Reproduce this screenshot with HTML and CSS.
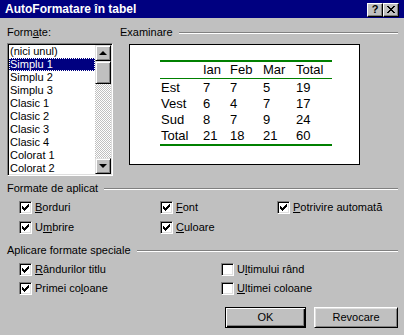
FILE: index.html
```html
<!DOCTYPE html>
<html lang="ro">
    <head>
        <meta charset="utf-8" />
        <title>AutoFormatare în tabel</title>
        <link rel="stylesheet" href="styles.css">
    </head>
    <body>
        <div class="titlebar">
            <span class="title">AutoFormatare în tabel</span>
            <div class="caption-btns">
                <span class="cbtn help">?</span>
                <span class="cbtn close">
                    <svg width="8" height="7" viewBox="0 0 8 7" shape-rendering="crispEdges"><path d="M0 0h2v1h1v1h2V1h1V0h2v1H7v1H6v1H5v1h1v1h1v1h1v1H6V6H5V5H3v1H2v1H0V6h1V5h1V4h1V3H2V2H1V1H0z" fill="#000"/></svg>
                </span>
            </div>
        </div>

        <div class="dialog">
            <div class="top">
                <div class="formats">
                    <div class="label">Form<u>a</u>te:</div>
                    <div class="listbox">
                        <ul class="items">
                            <li>(nici unul)</li>
                            <li class="selected"><span>Simplu 1</span></li>
                            <li>Simplu 2</li>
                            <li>Simplu 3</li>
                            <li>Clasic 1</li>
                            <li>Clasic 2</li>
                            <li>Clasic 3</li>
                            <li>Clasic 4</li>
                            <li>Colorat 1</li>
                            <li>Colorat 2</li>
                        </ul>
                        <div class="scrollbar">
                            <span class="sbtn"><span class="arrow up"></span></span>
                            <span class="thumb"></span>
                            <span class="track"></span>
                            <span class="sbtn"><span class="arrow down"></span></span>
                        </div>
                    </div>
                </div>

                <div class="preview-group">
                    <div class="group-head"><span>Examinare</span><span class="etch"></span></div>
                    <div class="preview">
                        <div class="sample">
                            <div class="srow head"><span></span><span>Ian</span><span>Feb</span><span>Mar</span><span>Total</span></div>
                            <div class="srow first"><span>Est</span><span>7</span><span>7</span><span>5</span><span>19</span></div>
                            <div class="srow"><span>Vest</span><span>6</span><span>4</span><span>7</span><span>17</span></div>
                            <div class="srow"><span>Sud</span><span>8</span><span>7</span><span>9</span><span>24</span></div>
                            <div class="srow"><span>Total</span><span>21</span><span>18</span><span>21</span><span>60</span></div>
                        </div>
                    </div>
                </div>
            </div>

            <div class="group-head apply">Formate de aplicat<span class="etch"></span></div>
            <div class="checks three">
                <label class="check"><span class="box on"></span><u>B</u>orduri</label>
                <label class="check"><span class="box on"></span><u>F</u>ont</label>
                <label class="check"><span class="box on"></span><u>P</u>otrivire automată</label>
                <label class="check"><span class="box on"></span>U<u>m</u>brire</label>
                <label class="check"><span class="box on"></span><u>C</u>uloare</label>
            </div>

            <div class="group-head special">Aplicare formate speciale<span class="etch"></span></div>
            <div class="checks two">
                <label class="check"><span class="box on"></span><u>R</u>ândurilor titlu</label>
                <label class="check"><span class="box"></span>U<u>l</u>timului rând</label>
                <label class="check"><span class="box on"></span>Primei co<u>l</u>oane</label>
                <label class="check"><span class="box"></span><u>U</u>ltimei coloane</label>
            </div>

            <div class="buttons">
                <span class="btn default">OK</span>
                <span class="btn">Revocare</span>
            </div>
        </div>
    </body>
</html>
```

FILE: styles.css
```css
* {
    box-sizing: border-box;
}
body {
    margin: 0;
    background-color: #c0c0c0;
    font-family: "Liberation Sans", Arial, sans-serif;
    font-size: 11px;
    line-height: 13px;
    color: #000;
}
u {
    text-decoration-thickness: 1px;
    text-underline-offset: 1px;
}

/* title bar */
.titlebar {
    height: 18px;
    background-color: #000080;
    display: flex;
    align-items: center;
    justify-content: space-between;
    padding: 0 5px 0 5px;
}
.title {
    color: #fff;
    font-weight: bold;
    font-size: 12px;
}
.caption-btns {
    display: flex;
    gap: 0;
    padding-top: 1px;
}
.cbtn {
    width: 16px;
    height: 14px;
    display: flex;
    align-items: center;
    justify-content: center;
    background-color: #c0c0c0;
    border: 1px solid;
    border-color: #fff #000 #000 #fff;
    box-shadow: inset -1px -1px #808080;
    font-weight: bold;
    font-size: 11px;
}
.close {
    margin-left: 0;
}

/* dialog body */
.dialog {
    padding: 8px 6px 0 7px;
}
.top {
    display: flex;
    gap: 7px;
}
.formats {
    width: 106px;
}
.label {
    height: 13px;
    margin-bottom: 4px;
}
.listbox {
    height: 133px;
    display: flex;
    background-color: #fff;
    border: 1px solid;
    border-color: #808080 #fff #fff #808080;
    box-shadow: inset 1px 1px #000, inset -1px -1px #dfdfdf;
    padding: 1px;
    overflow: hidden;
}
.items {
    list-style: none;
    margin: 0;
    padding: 0;
    flex: 1;
    overflow: hidden;
}
.items li {
    height: 13px;
    padding-left: 1px;
    white-space: nowrap;
}
.items li.selected {
    background-color: #000080;
    color: #fff;
    outline: 1px dotted #fff;
    outline-offset: -1px;
}
.scrollbar {
    width: 16px;
    display: flex;
    flex-direction: column;
}
.sbtn, .thumb {
    background-color: #c0c0c0;
    border: 1px solid;
    border-color: #dfdfdf #000 #000 #dfdfdf;
    box-shadow: inset 1px 1px #fff, inset -1px -1px #808080;
}
.sbtn {
    height: 16px;
    display: flex;
    align-items: center;
    justify-content: center;
}
.thumb {
    height: 23px;
}
.track {
    flex: 1;
    background-color: #fff;
    background-image: repeating-conic-gradient(#c0c0c0 0 25%, #fff 0 50%);
    background-size: 2px 2px;
}
.arrow {
    width: 0;
    height: 0;
    border-left: 4px solid transparent;
    border-right: 4px solid transparent;
}
.arrow.up {
    border-bottom: 4px solid #000;
}
.arrow.down {
    border-top: 4px solid #000;
}

/* preview */
.preview-group {
    flex: 1;
}
.group-head {
    height: 13px;
    display: flex;
    align-items: center;
    white-space: nowrap;
}
.etch {
    flex: 1;
    height: 2px;
    margin-left: 6px;
    border-top: 1px solid #808080;
    border-bottom: 1px solid #fff;
}
.preview {
    margin: 5px 0 0 9px;
    width: 231px;
    height: 121px;
    background-color: #fff;
    border: 1px solid #000;
    padding: 15px 0 0 30px;
}
.sample {
    width: 172px;
    border-top: 2px solid #008000;
    border-bottom: 2px solid #008000;
    font-size: 13px;
    line-height: 16px;
}
.srow {
    display: grid;
    grid-template-columns: 42px 27px 33px 33px 37px;
    padding-left: 1px;
}
.srow.head {
    border-bottom: 1px solid #008000;
}
.srow.first {
    margin-top: 1px;
}

/* option groups */
.group-head.apply {
    margin-top: 6px;
}
.group-head.special {
    margin-top: 7px;
}
.checks {
    display: grid;
    padding-left: 12px;
}
.checks.three {
    grid-template-columns: 141px 117px 1fr;
    grid-auto-rows: 20px;
    margin-top: 2px;
}
.checks.two {
    grid-template-columns: 202px 1fr;
    grid-auto-rows: 19px;
    margin-top: 3px;
}
.check {
    display: flex;
    align-items: center;
    white-space: nowrap;
}
.box {
    width: 13px;
    height: 13px;
    margin-right: 3px;
    background-color: #fff;
    border: 1px solid;
    border-color: #808080 #fff #fff #808080;
    box-shadow: inset 1px 1px #000, inset -1px -1px #dfdfdf;
}
.box.on {
    background-image: url("data:image/svg+xml;utf8,<svg xmlns='http://www.w3.org/2000/svg' width='7' height='7' shape-rendering='crispEdges'><path d='M0 2h1v3H0zM1 3h1v3H1zM2 4h1v3H2zM3 3h1v3H3zM4 2h1v3H4zM5 1h1v3H5zM6 0h1v3H6z' fill='black'/></svg>");
    background-repeat: no-repeat;
    background-position: 2px 2px;
}

/* buttons */
.buttons {
    display: flex;
    justify-content: flex-end;
    gap: 8px;
    margin-top: 9px;
}
.btn {
    width: 84px;
    height: 21px;
    display: flex;
    align-items: center;
    justify-content: center;
    border: 1px solid;
    border-color: #fff #000 #000 #fff;
    box-shadow: inset 1px 1px #dfdfdf, inset -1px -1px #808080;
}
.btn.default {
    width: 81px;
    border-color: #000;
    box-shadow: inset 1px 1px #fff, inset -1px -1px #000, inset -2px -2px #808080;
}
```
